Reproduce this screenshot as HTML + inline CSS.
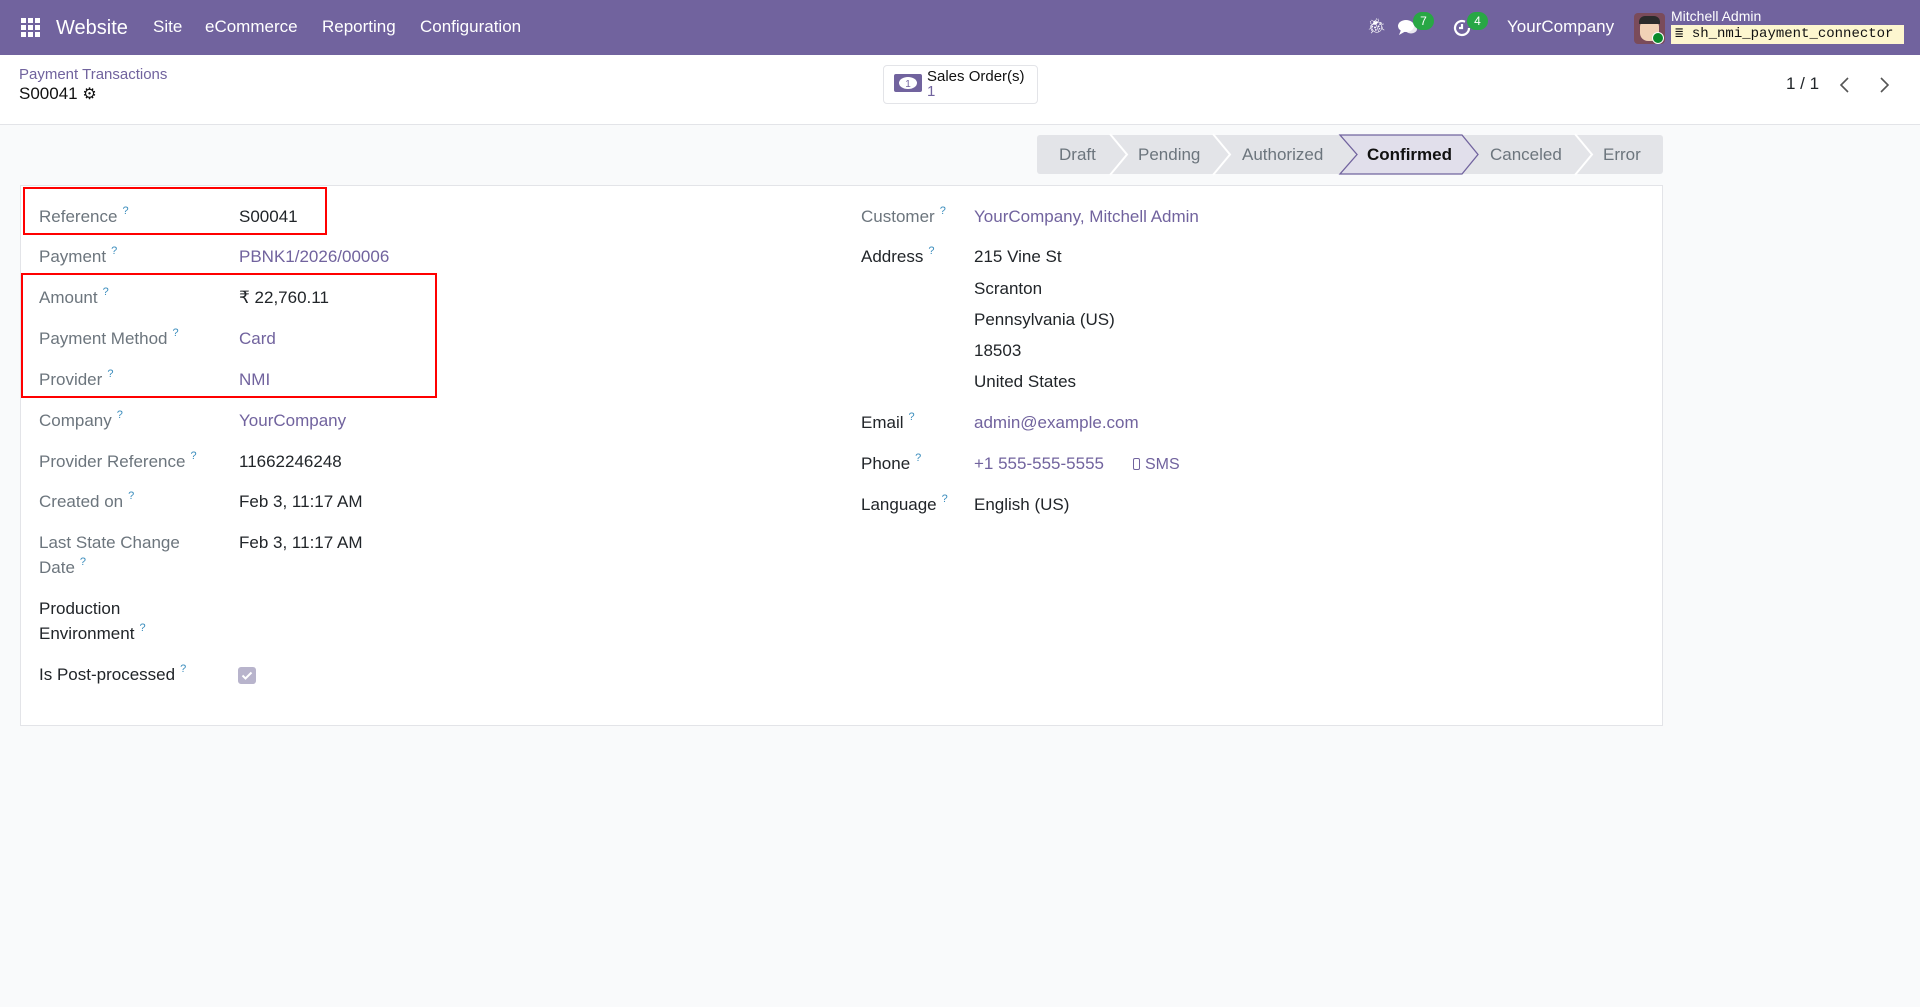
<!DOCTYPE html>
<html><head><meta charset="utf-8"><style>
*{box-sizing:border-box;margin:0;padding:0}
body{width:1920px;height:1007px;background:#f9fafb;font-family:"Liberation Sans",Arial,sans-serif;position:relative;overflow:hidden;color:#212529}
.a{position:absolute;white-space:nowrap;line-height:20px;font-size:17px}
.nav{position:absolute;left:0;top:0;width:1920px;height:55px;background:#71639e}
.nav .a{color:#fff}
.lbl{color:#6c757d}
.blk{color:#212529}
.lnk{color:#71639e}
sup.q{color:#3b8dbd;font-size:11px;margin-left:5px;vertical-align:baseline;position:relative;top:-8px;line-height:0}
.cp{position:absolute;left:0;top:55px;width:1920px;height:70px;background:#fff;border-bottom:1px solid #e3e4e8}
.sheet{position:absolute;left:20px;top:185px;width:1643px;height:541px;background:#fff;border:1px solid #e3e4e8}
.red{position:absolute;border:2px solid #f00}
</style></head><body>
<div class="nav">
  <svg style="position:absolute;left:21px;top:18px" width="20" height="20" viewBox="0 0 20 20" fill="#fff">
    <rect x="0" y="0" width="5" height="5"/><rect x="7" y="0" width="5" height="5"/><rect x="14" y="0" width="5" height="5"/>
    <rect x="0" y="7" width="5" height="5"/><rect x="7" y="7" width="5" height="5"/><rect x="14" y="7" width="5" height="5"/>
    <rect x="0" y="14" width="5" height="5"/><rect x="7" y="14" width="5" height="5"/><rect x="14" y="14" width="5" height="5"/>
  </svg>
  <div class="a" style="left:56px;top:16px;font-size:20px;line-height:24px">Website</div>
  <div class="a" style="left:153px;top:17px">Site</div>
  <div class="a" style="left:205px;top:17px">eCommerce</div>
  <div class="a" style="left:322px;top:17px">Reporting</div>
  <div class="a" style="left:420px;top:17px">Configuration</div>
  <div class="a" style="left:1367px;top:17px;font-size:15px">🐞︎</div>
  <svg style="position:absolute;left:1397px;top:18px" width="22" height="20" viewBox="0 0 22 20" fill="#fff"><ellipse cx="9" cy="8" rx="8" ry="6"/><path d="M4 12 L2 17 L9 13Z"/><ellipse cx="14" cy="11" rx="6" ry="4.5" opacity=".85"/></svg>
  <div style="position:absolute;left:1413px;top:12px;width:21px;height:18px;border-radius:9px;background:#28a745;color:#fff;font-size:12px;text-align:center;line-height:18px">7</div>
  <svg style="position:absolute;left:1452px;top:18px" width="20" height="20" viewBox="0 0 20 20" fill="none" stroke="#fff" stroke-width="2.2"><path d="M17 10a7 7 0 1 1-4-6.3"/><path d="M10 6v4h-3"/></svg>
  <div style="position:absolute;left:1467px;top:12px;width:21px;height:18px;border-radius:9px;background:#28a745;color:#fff;font-size:12px;text-align:center;line-height:18px">4</div>
  <div class="a" style="left:1507px;top:17px">YourCompany</div>
  <div style="position:absolute;left:1634px;top:13px;width:31px;height:31px;border-radius:4px;background:#7a4b5a;overflow:hidden">
    <div style="position:absolute;left:6px;top:6px;width:19px;height:22px;background:#f1d2b6;border-radius:8px"></div>
    <div style="position:absolute;left:5px;top:3px;width:21px;height:8px;background:#2b2b2b;border-radius:6px 6px 0 0"></div>
  </div>
  <div style="position:absolute;left:1652px;top:32px;width:12px;height:12px;border-radius:6px;background:#0a8a2a;border:1.5px solid #fff"></div>
  <div class="a" style="left:1671px;top:8px;font-size:14px;line-height:16px">Mitchell Admin</div>
  <div style="position:absolute;left:1671px;top:25px;width:233px;height:19px;background:#fdf6cf;color:#111;font-family:'Liberation Mono',monospace;font-size:14px;line-height:19px;padding-left:4px">≣ sh_nmi_payment_connector</div>
</div>

<div class="cp">
  <div class="a lnk" style="left:19px;top:10px;font-size:15px">Payment Transactions</div>
  <div class="a" style="left:19px;top:29px;font-size:17px;color:#111">S00041 <span style="font-size:16px">⚙</span></div>
  <div style="position:absolute;left:883px;top:10px;width:155px;height:39px;border:1px solid #e3e4e8;border-radius:4px;background:#fff"></div>
  <svg style="position:absolute;left:894px;top:19px" width="28" height="18" viewBox="0 0 28 18"><rect x="0" y="0" width="28" height="18" rx="2" fill="#71639e"/><ellipse cx="14" cy="9" rx="9" ry="6" fill="#fff"/><text x="14" y="13" font-size="10" text-anchor="middle" fill="#71639e" font-family="Liberation Sans">1</text></svg>
  <div class="a" style="left:927px;top:13px;font-size:15px;line-height:17px;color:#111">Sales Order(s)</div>
  <div class="a lnk" style="left:927px;top:29px;font-size:15px;line-height:15px">1</div>
  <div class="a" style="left:1786px;top:19px;font-size:17px;color:#212529">1 / 1</div>
  <svg style="position:absolute;left:1836px;top:20px" width="60" height="20" viewBox="0 0 60 20" fill="none" stroke="#555" stroke-width="1.6"><path d="M12 3 L5 10 L12 17"/><path d="M45 3 L52 10 L45 17"/></svg>
</div>

<svg style="position:absolute;left:0;top:0" width="1920" height="200">
  <rect x="1037" y="135" width="626" height="39" rx="3" fill="#e3e4e8"/>
  <g fill="none" stroke="#fff" stroke-width="2">
    <path d="M1110 134 L1127 154.5 L1110 175"/>
    <path d="M1213 134 L1230 154.5 L1213 175"/>
    <path d="M1575 134 L1592 154.5 L1575 175"/>
  </g>
  <path d="M1340 135 L1462 135 L1478 154.5 L1462 174 L1340 174 L1357 154.5Z" fill="#e1dfeb" stroke="#71639e" stroke-width="1.3"/>
</svg>
<div class="a" style="left:1059px;top:145px;color:#6c757d">Draft</div>
<div class="a" style="left:1138px;top:145px;color:#6c757d">Pending</div>
<div class="a" style="left:1242px;top:145px;color:#6c757d">Authorized</div>
<div class="a" style="left:1367px;top:145px;color:#111;font-weight:bold">Confirmed</div>
<div class="a" style="left:1490px;top:145px;color:#6c757d">Canceled</div>
<div class="a" style="left:1603px;top:145px;color:#6c757d">Error</div>

<div class="sheet"></div>
<div class="red" style="left:23px;top:187px;width:304px;height:48px"></div>
<div class="red" style="left:21px;top:273px;width:416px;height:125px"></div>

<div class="a lbl" style="left:39px;top:207px">Reference<sup class="q">?</sup></div>
<div class="a blk" style="left:239px;top:207px">S00041</div>
<div class="a lbl" style="left:39px;top:247px">Payment<sup class="q">?</sup></div>
<div class="a lnk" style="left:239px;top:247px">PBNK1/2026/00006</div>
<div class="a lbl" style="left:39px;top:288px">Amount<sup class="q">?</sup></div>
<div class="a blk" style="left:239px;top:288px">₹ 22,760.11</div>
<div class="a lbl" style="left:39px;top:329px">Payment Method<sup class="q">?</sup></div>
<div class="a lnk" style="left:239px;top:329px">Card</div>
<div class="a lbl" style="left:39px;top:370px">Provider<sup class="q">?</sup></div>
<div class="a lnk" style="left:239px;top:370px">NMI</div>
<div class="a lbl" style="left:39px;top:411px">Company<sup class="q">?</sup></div>
<div class="a lnk" style="left:239px;top:411px">YourCompany</div>
<div class="a lbl" style="left:39px;top:452px">Provider Reference<sup class="q">?</sup></div>
<div class="a blk" style="left:239px;top:452px">11662246248</div>
<div class="a lbl" style="left:39px;top:492px">Created on<sup class="q">?</sup></div>
<div class="a blk" style="left:239px;top:492px">Feb 3, 11:17 AM</div>
<div class="a lbl" style="left:39px;top:533px">Last State Change</div>
<div class="a lbl" style="left:39px;top:558px">Date<sup class="q">?</sup></div>
<div class="a blk" style="left:239px;top:533px">Feb 3, 11:17 AM</div>
<div class="a blk" style="left:39px;top:599px">Production</div>
<div class="a blk" style="left:39px;top:624px">Environment<sup class="q">?</sup></div>
<div class="a blk" style="left:39px;top:665px">Is Post-processed<sup class="q">?</sup></div>
<div style="position:absolute;left:238px;top:667px;width:18px;height:17px;border-radius:3px;background:#b8b4cc"></div>
<svg style="position:absolute;left:238px;top:667px" width="18" height="17" viewBox="0 0 18 17" fill="none" stroke="#fff" stroke-width="2"><path d="M4.5 8.5 L7.5 11.5 L13.5 5.5"/></svg>

<div class="a lbl" style="left:861px;top:207px">Customer<sup class="q">?</sup></div>
<div class="a lnk" style="left:974px;top:207px">YourCompany, Mitchell Admin</div>
<div class="a blk" style="left:861px;top:247px">Address<sup class="q">?</sup></div>
<div class="a blk" style="left:974px;top:247px">215 Vine St</div>
<div class="a blk" style="left:974px;top:279px">Scranton</div>
<div class="a blk" style="left:974px;top:310px">Pennsylvania (US)</div>
<div class="a blk" style="left:974px;top:341px">18503</div>
<div class="a blk" style="left:974px;top:372px">United States</div>
<div class="a blk" style="left:861px;top:413px">Email<sup class="q">?</sup></div>
<div class="a lnk" style="left:974px;top:413px">admin@example.com</div>
<div class="a blk" style="left:861px;top:454px">Phone<sup class="q">?</sup></div>
<div class="a lnk" style="left:974px;top:454px">+1 555-555-5555</div>
<div class="a lnk" style="left:1133px;top:455px;font-size:16px"><span style="display:inline-block;width:7px;height:12px;border:1.6px solid #71639e;border-radius:2px;margin-right:5px;vertical-align:-1px"></span>SMS</div>
<div class="a blk" style="left:861px;top:495px">Language<sup class="q">?</sup></div>
<div class="a blk" style="left:974px;top:495px">English (US)</div>
</body></html>
